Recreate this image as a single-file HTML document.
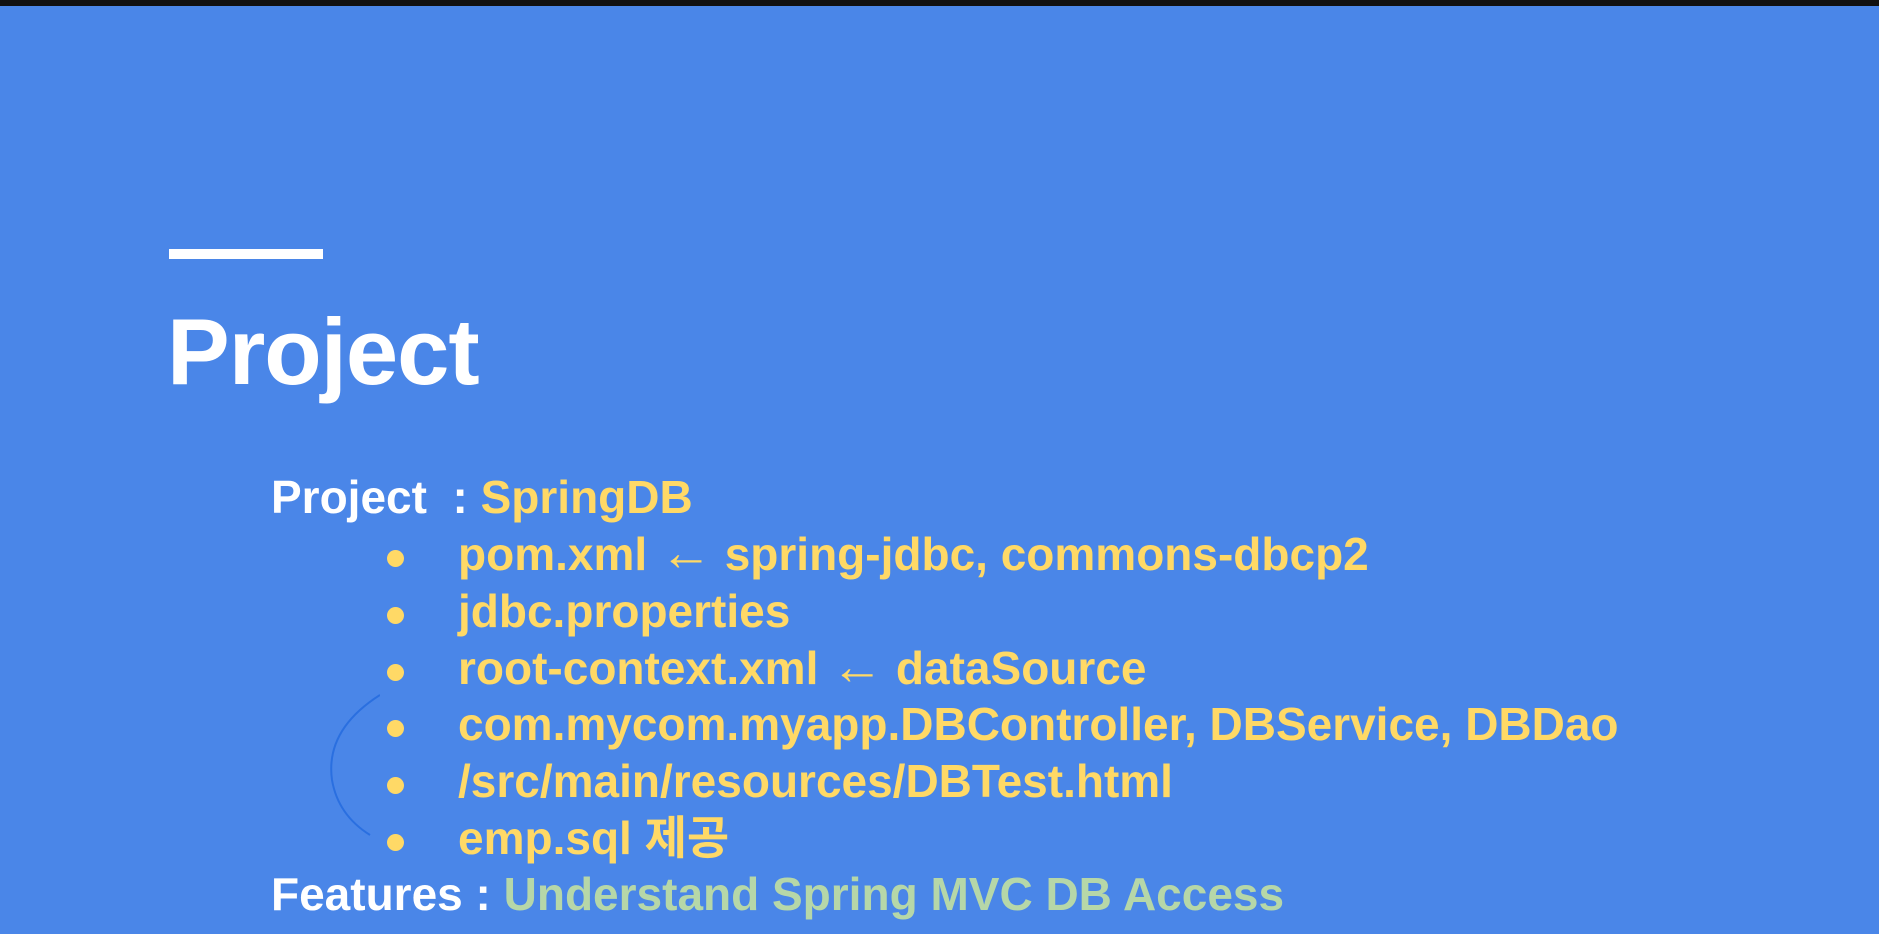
<!DOCTYPE html>
<html><head><meta charset="utf-8"><style>
html,body{margin:0;padding:0}
body{width:1879px;height:934px;background:#4a86e8;position:relative;overflow:hidden;font-family:"Liberation Sans","Noto Sans CJK KR",sans-serif;font-weight:bold}
.top{position:absolute;left:0;top:0;width:1879px;height:6px;background:#111}
.bar{position:absolute;left:169px;top:249px;width:154px;height:10px;background:#fff}
.title{position:absolute;left:167px;top:305px;font-size:94px;color:#fff;line-height:1;letter-spacing:-1px}
.l{position:absolute;font-size:46px;line-height:1;white-space:nowrap;color:#ffd966}
.w{color:#fff}.g{color:#b6d7a8}
.a{font-size:52px;line-height:0}
.dot{position:absolute;left:387px;width:17px;height:17px;border-radius:50%;background:#ffd966}
</style></head><body>
<div class="top"></div>
<div class="bar"></div>
<div class="title">Project</div>
<div class="l" style="left:271px;top:474px"><span class="w">Project</span>&nbsp;&nbsp;<span class="w">:</span> SpringDB</div>
<div class="dot" style="top:550px"></div><div class="l" style="left:458px;top:531px">pom.xml <span class="a">←</span> spring-jdbc, commons-dbcp2</div>
<div class="dot" style="top:607px"></div><div class="l" style="left:458px;top:588px">jdbc.properties</div>
<div class="dot" style="top:664px"></div><div class="l" style="left:458px;top:645px">root-context.xml <span class="a">←</span> dataSource</div>
<div class="dot" style="top:720px"></div><div class="l" style="left:458px;top:701px">com.mycom.myapp.DBController, DBService, DBDao</div>
<div class="dot" style="top:777px"></div><div class="l" style="left:458px;top:758px">/src/main/resources/DBTest.html</div>
<div class="dot" style="top:834px"></div><div class="l" style="left:458px;top:815px">emp.sql 제공</div>
<div class="l" style="left:271px;top:871px"><span class="w">Features :</span> <span class="g">Understand Spring MVC DB Access</span></div>
<svg style="position:absolute;left:320px;top:690px" width="60" height="150"><path d="M60 5 Q5 40 12 90 Q18 125 50 145" fill="none" stroke="#2a6fe0" stroke-width="2"/></svg>
</body></html>
